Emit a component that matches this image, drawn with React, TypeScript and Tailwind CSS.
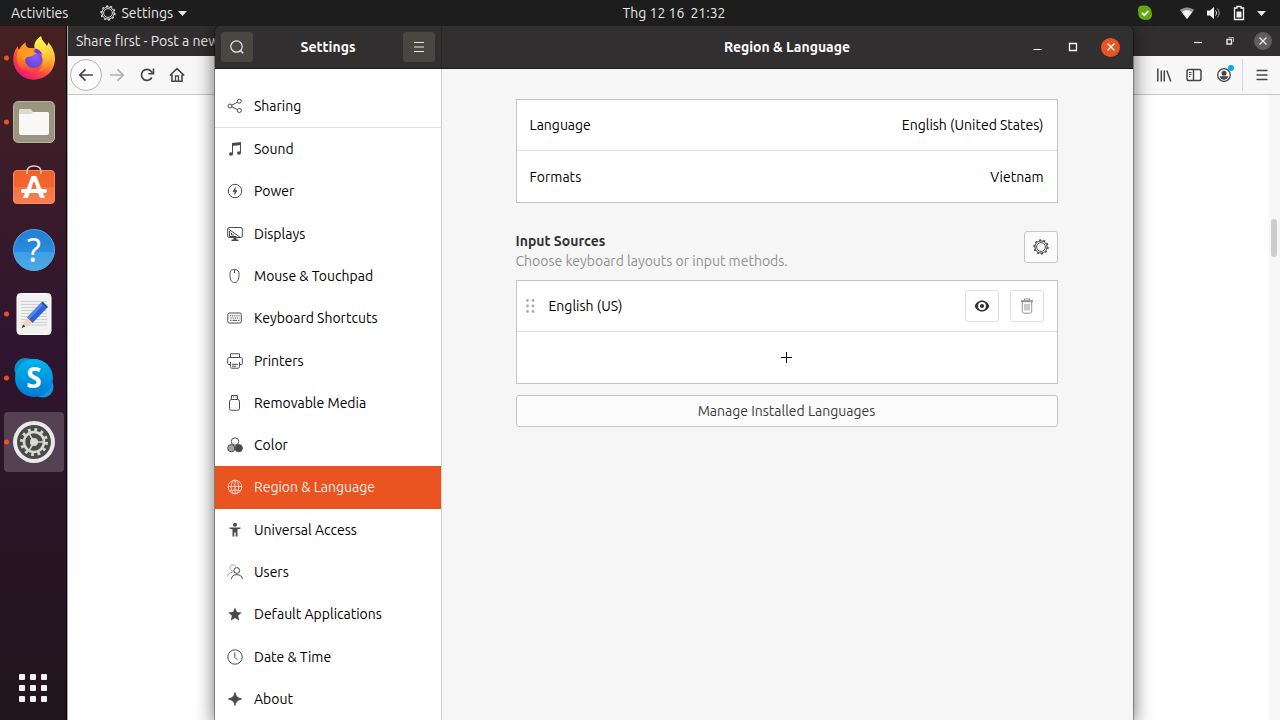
import type { ReactNode } from "react";
import clsx from "clsx";

/* ---------- icons ---------- */

function Svg({ children, size = 16 }: { children: ReactNode; size?: number }) {
  return (
    <svg
      width={size}
      height={size}
      viewBox="0 0 16 16"
      fill="none"
      stroke="currentColor"
      strokeWidth="1"
      aria-hidden="true"
      className="shrink-0"
    >
      {children}
    </svg>
  );
}

const GearIcon = () => (
  <Svg>
    <circle cx="8" cy="8" r="4.4" strokeWidth=".9" />
    <circle cx="8" cy="8" r="6.1" />
    <circle cx="8" cy="8" r="7" strokeWidth="1.3" strokeDasharray="2 2.398" />
  </Svg>
);

const SearchIcon = () => (
  <Svg>
    <circle cx="7.5" cy="7.5" r="5.7" strokeWidth="1.2" />
    <path d="M11.5 11.5 14.200 14.200" strokeWidth="1.6" />
  </Svg>
);

const MenuIcon = () => (
  <Svg>
    <path d="M3 3.5h10M3 8h10M3 12.5h10" strokeWidth="1.2" />
  </Svg>
);

const CloseIcon = () => (
  <Svg>
    <path d="M4.500 4.500l7 7M11.500 4.500l-7 7" strokeWidth="1.400" />
  </Svg>
);

const Caret = () => (
  <svg width="9" height="5" viewBox="0 0 9 5" fill="currentColor" aria-hidden="true">
    <path d="M0 0h9L4.500 5z" />
  </svg>
);

const sharing = (
  <Svg>
    <circle cx="3" cy="8" r="2" />
    <circle cx="12.3" cy="3.2" r="2" />
    <circle cx="12.3" cy="12.5" r="2" />
    <path d="M4.800 7.100l5.700-2.900M4.800 8.900l5.700 2.800" />
  </Svg>
);

const sound = (
  <Svg>
    <path d="M5 2l9-1v3l-9 1z" fill="currentColor" stroke="none" />
    <path d="M5.500 3v10M13.500 2v9.500" />
    <ellipse cx="4" cy="13" rx="2" ry="1.800" fill="currentColor" stroke="none" />
    <ellipse cx="12" cy="12" rx="2" ry="1.800" fill="currentColor" stroke="none" />
  </Svg>
);

const power = (
  <Svg>
    <circle cx="8" cy="8" r="6.700" />
    <path d="M8.700 3.500L5.500 8.800h2L7.300 12.500l3.200-5.300h-2z" fill="currentColor" stroke="none" />
  </Svg>
);

const displays = (
  <Svg>
    <rect x=".7" y="1.500" width="14.600" height="10" rx="1.500" />
    <path d="M1.500 3l12 8.500M2.500 5v5.500h7M4.500 7v2h2.500" />
    <path d="M6.500 12h3v1.500h2V15h-7v-1.500h2z" fill="currentColor" stroke="none" />
  </Svg>
);

const mouse = (
  <Svg>
    <path d="M7.500 1.500C4 1.500 3 3 3 6.500c0 5 1.300 8 4.500 8s4.500-3 4.500-8c0-3.500-1-5-4.500-5z" />
    <path d="M7.500 1.500V5" />
  </Svg>
);

const keyboard = (
  <Svg>
    <rect x=".8" y="3" width="13.500" height="10" rx="1.500" />
    <path d="M3 5.800h9.500M3.500 8h9" strokeDasharray="1.200 .9" />
    <path d="M3 10.300h1.500M5.500 10.300h4.500M11 10.300h1.500" />
  </Svg>
);

const printer = (
  <Svg>
    <path d="M3.500 4.500V.8h9v3.700M3 11.500H1.700C1 11.500.7 11 .7 10.500V6c0-1 .5-1.500 1.500-1.500h11.600c1 0 1.500.5 1.500 1.500v4.500c0 .5-.3 1-1 1H13" />
    <path d="M3.500 9v4.500c0 1.200.5 1.700 1.500 1.700h6c1 0 1.500-.5 1.500-1.700V9M5 11.300h6M5 13.200h4" />
  </Svg>
);

const media = (
  <Svg>
    <path d="M4.500 4.500v-4h6v4" />
    <rect x="2.500" y="4.500" width="10" height="10.800" rx="2" />
    <path d="M6 2h1M8.500 2h1" strokeWidth="1.200" />
  </Svg>
);

const color = (
  <Svg>
    <circle cx="8" cy="4.500" r="3.700" />
    <circle cx="4.300" cy="11.200" r="3.600" fill="#a5a5a5" />
    <circle cx="11.800" cy="11.200" r="3.600" fill="currentColor" />
  </Svg>
);

const globe = (
  <Svg>
    <circle cx="8" cy="8" r="6.800" />
    <ellipse cx="8" cy="8" rx="3.800" ry="6.800" />
    <path d="M8 1.200v13.600M1.200 7.500h13.600M2.500 11.700c3-.7 8-.7 11 0" />
  </Svg>
);

const access = (
  <Svg>
    <g fill="currentColor" stroke="none">
      <circle cx="8" cy="2.800" r="2" />
      <path d="M2.500 5.500h11v1.200l-3 .6v7.200H8.700V10.500H7.300v4H5.500V7.300l-3-.6z" />
    </g>
  </Svg>
);

const users = (
  <Svg>
    <g opacity=".5">
      <path d="M6.500 7.500C4 6.500 3 5 3 3.500 3 1.700 4.200.8 5.800.8c1.500 0 2.500.7 2.800 2" />
      <path d="M.7 12.500C.7 10 2 8.700 5.500 8.300" />
    </g>
    <circle cx="9.800" cy="6.500" r="2.900" />
    <path d="M4.500 15c.3-3 2-4.300 5.200-4.300S15 12 15.400 15" />
  </Svg>
);

const star = (
  <Svg>
    <path
      d="M8 1.500l1.900 4.600 4.900.4-3.700 3.200 1.100 4.800L8 11.900l-4.200 2.600 1.100-4.800L1.200 6.500l4.900-.4z"
      fill="currentColor"
      stroke="none"
    />
  </Svg>
);

const clock = (
  <Svg>
    <circle cx="8" cy="8" r="7.200" />
    <path d="M7.800 3.500v4.800l2.500 2.500" />
  </Svg>
);

const about = (
  <Svg>
    <path
      d="M8 1.500c.8 3.500 1.800 5.200 6.500 6.500C9.800 9.300 8.800 11 8 14.500 7.200 11 6.200 9.300 1.500 8 6.200 6.700 7.200 5 8 1.500z"
      fill="currentColor"
      stroke="currentColor"
    />
  </Svg>
);

/* ---------- dock app icons ---------- */

const FirefoxLogo = () => (
  <svg width="42" height="44" viewBox="0 0 126 130" aria-hidden="true">
    <defs>
      <linearGradient id="ff-body" x1=".85" y1=".1" x2=".25" y2="1">
        <stop offset="0" stopColor="#fff44f" />
        <stop offset=".35" stopColor="#ffa430" />
        <stop offset=".65" stopColor="#ff4b3a" />
        <stop offset="1" stopColor="#e5127e" />
      </linearGradient>
      <linearGradient id="ff-flame" x1=".5" y1="0" x2=".6" y2="1">
        <stop offset="0" stopColor="#fff44f" />
        <stop offset=".5" stopColor="#ffd23c" />
        <stop offset="1" stopColor="#ff7a1c" />
      </linearGradient>
      <linearGradient id="ff-fox" x1=".3" y1="0" x2=".5" y2="1">
        <stop offset="0" stopColor="#ffa41e" />
        <stop offset=".45" stopColor="#ff7a20" />
        <stop offset="1" stopColor="#ff3f4a" />
      </linearGradient>
      <radialGradient id="ff-globe" cx=".6" cy=".35" r=".75">
        <stop offset="0" stopColor="#9059ff" />
        <stop offset="1" stopColor="#5a45c8" />
      </radialGradient>
    </defs>
    <path
      d="M84 0c2 14 12 18 17 29 3-3 4-6 5-11 14 16 21 34 20 54-3 34-28 57-62 58C30 131 2 106 1 72 0 52 8 38 14 30c1 5 2 8 4 11 4-10 12-18 20-23-2 8 2 13 8 16 8 3 16 2 20 0C64 20 74 6 84 0z"
      fill="url(#ff-body)"
    />
    <path
      d="M84 0c2 14 12 18 17 29 8 12 12 24 9 44-5 22-20 32-34 33 14-12 18-30 8-48C76 46 62 42 64 26 66 14 74 6 84 0z"
      fill="url(#ff-flame)"
    />
    <path
      d="M16 42c10-7 20-6 28-3 8-4 20-4 28 2 14 10 20 24 16 38-3 12-9 23-19 26-24 4-48-5-56-25-3-12-2-28 3-38z"
      fill="url(#ff-fox)"
    />
    <circle cx="62" cy="69" r="26" fill="url(#ff-globe)" />
    <path
      d="M16 42c10-7 20-6 28-3 6-3 12-4 17-3-2 4-1 8 2 11 3 2 7 3 10 4-6 2-10 5-15 8-6 3-13 2-18 5-3 2-4 6-4 10C26 66 18 54 16 42z"
      fill="#ff9a22"
    />
    <path d="M64 37c11-1 21 6 25 20-5-5-11-7-17-6-4-3-8-8-8-14z" fill="#7a2fe0" />
  </svg>
);

const FilesLogo = () => (
  <svg width="42" height="42" viewBox="0 0 42 42" aria-hidden="true">
    <rect x=".5" y=".5" width="41" height="41" rx="4.500" fill="#9b9480" stroke="#b8b2a0" />
    <path d="M6 9.500C6 8.500 6.800 8 7.500 8H18l2 3v5H6z" fill="#dfdacb" />
    <path d="M6 13h12l2-2h14.500c1 0 1.500.6 1.500 1.500V32c0 1.200-.8 2-2 2H8c-1.200 0-2-.8-2-2z" fill="#f9f8f6" />
  </svg>
);

const SoftwareLogo = () => (
  <svg width="42" height="42" viewBox="0 2 42 42" aria-hidden="true">
    <defs>
      <linearGradient id="bag" x1="0" y1="0" x2="0" y2="1">
        <stop offset="0" stopColor="#f1602a" />
        <stop offset=".5" stopColor="#f2652f" />
        <stop offset=".5" stopColor="#f4743f" />
        <stop offset="1" stopColor="#f4804d" />
      </linearGradient>
    </defs>
    <rect x=".5" y="7.500" width="41" height="33" rx="3.500" fill="url(#bag)" stroke="#f58a60" />
    <path d="M14 11V9c0-4 3-6 7-6s7 2 7 6v2" fill="none" stroke="#f3cfa2" strokeWidth="1.500" />
    <text
      x="21"
      y="35"
      textAnchor="middle"
      fontFamily="Lato, sans-serif"
      fontWeight="900"
      fontSize="30"
      fill="#fff"
    >
      A
    </text>
    <rect x="8" y="26" width="26" height="4" rx="2" fill="#fff" />
  </svg>
);

const HelpLogo = () => (
  <svg width="42" height="42" viewBox="0 0 42 42" aria-hidden="true">
    <defs>
      <linearGradient id="help" x1="0" y1="0" x2="0" y2="1">
        <stop offset="0" stopColor="#1f80d6" />
        <stop offset=".54" stopColor="#2b8bdc" />
        <stop offset=".54" stopColor="#3f9de2" />
        <stop offset="1" stopColor="#4caae8" />
      </linearGradient>
    </defs>
    <circle cx="21" cy="21" r="20.500" fill="url(#help)" stroke="#56a9e6" />
    <text
      x="21"
      y="33"
      textAnchor="middle"
      fontFamily="'Noto Sans', sans-serif"
      fontSize="32"
      fill="#fff"
    >
      ?
    </text>
  </svg>
);

const EditorLogo = () => (
  <svg width="42" height="42" viewBox="0 0 42 42" aria-hidden="true">
    <rect x="4" y=".5" width="34" height="41" rx="3.500" fill="#f1f1f1" stroke="#fff" />
    <path
      d="M8 8.500h26M8 11.500h26M8 14.500h26M8 17.500h26M8 20.500h26M8 23.500h26M8 26.500h26M8 29.500h26M8 32h26"
      stroke="#c9c9c9"
      strokeWidth=".8"
    />
    <path d="M14 24.500L28 10l5.500 5.500L19.500 30z" fill="#2f62d9" />
    <path d="M14 24.500L28 10l2 2-14 14.500z" fill="#5484ee" />
    <path d="M28 10l1.500-1.500 5.500 5.500-1.500 1.500z" fill="#1d45ae" />
    <path d="M14 24.500l5.500 5.500L9 34.500z" fill="#f5d3ac" />
    <path d="M10.300 31.500l2 2L8.500 35z" fill="#333" />
  </svg>
);

const SkypeLogo = () => (
  <svg width="42" height="42" viewBox="0 0 42 42" aria-hidden="true">
    <defs>
      <linearGradient id="skype" x1="0" y1="0" x2="0" y2="1">
        <stop offset="0" stopColor="#00b7f0" />
        <stop offset="1" stopColor="#0078d4" />
      </linearGradient>
    </defs>
    <circle cx="12.500" cy="12" r="11" fill="#0a8fc9" />
    <circle cx="30" cy="30" r="10.500" fill="#1494dc" />
    <circle cx="21" cy="21" r="19" fill="url(#skype)" />
    <text
      x="21"
      y="31"
      textAnchor="middle"
      fontFamily="'Open Sans', sans-serif"
      fontWeight="700"
      fontSize="28"
      fill="#fff"
    >
      S
    </text>
  </svg>
);

const SettingsLogo = () => (
  <svg width="42" height="42" viewBox="0 0 42 42" fill="none" aria-hidden="true">
    <circle cx="21" cy="21" r="21" fill="#e9e9e9" />
    <circle cx="21" cy="21" r="17" fill="#4a4a48" />
    <circle cx="21" cy="21" r="12.500" stroke="#d8d8d8" strokeWidth="3" strokeDasharray="2.800 3.745" />
    <circle cx="21" cy="21" r="10" stroke="#d8d8d8" strokeWidth="2.600" />
    <circle cx="21" cy="21" r="4" fill="#d8d8d8" />
    <path d="M21 21h10M21 21l-5-8.700M21 21l-5 8.700" stroke="#d8d8d8" strokeWidth="1.600" />
  </svg>
);

/* ---------- data ---------- */

type DockApp = { name: string; icon: ReactNode; running?: boolean; active?: boolean };

const DOCK: DockApp[] = [
  { name: "Firefox", icon: <FirefoxLogo />, running: true },
  { name: "Files", icon: <FilesLogo />, running: true },
  { name: "Ubuntu Software", icon: <SoftwareLogo /> },
  { name: "Help", icon: <HelpLogo /> },
  { name: "Text Editor", icon: <EditorLogo />, running: true },
  { name: "Skype", icon: <SkypeLogo />, running: true },
  { name: "Settings", icon: <SettingsLogo />, running: true, active: true },
];

const PANELS: { label: string; icon: ReactNode }[] = [
  { label: "Sound", icon: sound },
  { label: "Power", icon: power },
  { label: "Displays", icon: displays },
  { label: "Mouse & Touchpad", icon: mouse },
  { label: "Keyboard Shortcuts", icon: keyboard },
  { label: "Printers", icon: printer },
  { label: "Removable Media", icon: media },
  { label: "Color", icon: color },
  { label: "Region & Language", icon: globe },
  { label: "Universal Access", icon: access },
  { label: "Users", icon: users },
  { label: "Default Applications", icon: star },
  { label: "Date & Time", icon: clock },
  { label: "About", icon: about },
];

/* ---------- desktop shell ---------- */

function TopBar() {
  return (
    <header className="flex h-[26px] shrink-0 items-center bg-[#1d1d1d] text-[#e6e6e6]">
      <div className="flex w-[212px] items-center gap-8 pl-[11px]">
        <button>Activities</button>
        <button className="flex items-center gap-[5px]">
          <GearIcon />
          Settings
          <Caret />
        </button>
      </div>
      <div className="flex-1 text-center">
        <button className="inline-flex gap-1.5">
          <span>Thg 12 16</span>
          <span>21:32</span>
        </button>
      </div>
      <div className="flex w-36 items-center justify-end gap-2.5 pr-3.5">
        <svg width="16" height="16" viewBox="0 0 16 16" className="mr-4" aria-label="Skype">
          <path
            d="M1 4.500C1 2 2.500.5 5 .8c5-1 9.500 1 9.700 7 1.300 4-1.500 7.700-5.200 7C4 15.500.7 12 1.300 7.500 1 6.500 1 5.500 1 4.500z"
            fill="#62a813"
          />
          <path d="M5 8l2.300 2.200L11.300 6" fill="none" stroke="#fff" strokeWidth="1.800" />
        </svg>
        <svg width="16" height="16" viewBox="0 0 16 16" fill="#f2f2f2" aria-label="Wi-Fi">
          <path d="M.8 5C5 1.500 11 1.500 15.200 5L8 14z" opacity=".55" />
          <path d="M2.800 7C6 4.800 10 4.800 13.200 7L8 14z" />
        </svg>
        <svg width="16" height="16" viewBox="0 0 16 16" fill="#f2f2f2" aria-label="Volume">
          <path d="M2 5.500h3L9 2v12L5 10.500H2z" />
          <path d="M10.500 5.500c1.300 1.500 1.300 3.500 0 5" fill="none" stroke="#f2f2f2" />
          <path d="M12.300 3.500c2.500 2.800 2.500 6.200 0 9" fill="none" stroke="#aaa" />
        </svg>
        <svg width="16" height="16" viewBox="0 0 16 16" fill="none" stroke="#f2f2f2" aria-label="Battery">
          <path d="M3.500 3H6V1.500h4V3h2.500v11.500h-9z" strokeWidth="1.300" />
          <path d="M5.500 6.500h5v6h-5z" fill="#f2f2f2" stroke="none" />
        </svg>
        <Caret />
      </div>
    </header>
  );
}

function Dock() {
  return (
    <nav
      aria-label="Dock"
      className="flex w-[67px] shrink-0 flex-col gap-1 border-r border-black bg-linear-to-b from-[#46201f] via-[#301530] via-45% to-[#22151c] pt-[2px]"
    >
      {DOCK.map((app) => (
        <button
          key={app.name}
          aria-label={app.name}
          className={clsx(
            "relative mx-1 flex h-[60px] w-[60px] shrink-0 items-center justify-center rounded",
            app.active && "bg-[#544254]"
          )}
        >
          {app.running && (
            <span className="absolute left-0 top-1/2 h-[5px] w-[5px] -translate-y-1/2 rounded-full bg-[#e95420]" />
          )}
          {app.icon}
        </button>
      ))}
      <button aria-label="Show Applications" className="mx-auto mb-[18px] mt-auto grid grid-cols-3 gap-[5px]">
        {Array.from({ length: 9 }, (_, i) => (
          <span key={i} className="h-1.5 w-1.5 rounded-[1px] bg-[#f2f2f2]" />
        ))}
      </button>
    </nav>
  );
}

function BrowserWindow() {
  return (
    <section className="flex min-w-0 flex-1 flex-col border-l border-[#a9a9a9] bg-white">
      <div className="flex h-[30px] shrink-0 items-center justify-between bg-[#312e2f] px-2 text-[#e8e8e8]">
        <span className="whitespace-nowrap">Share first - Post a new</span>
        <div className="flex items-center gap-4">
          <button aria-label="Minimize">
            <Svg>
              <path d="M4 9.500h8" strokeWidth="1.200" />
            </Svg>
          </button>
          <button aria-label="Restore">
            <Svg>
              <path d="M5 6.500h4.500V11H5z" strokeWidth="1.400" />
              <path d="M6.500 4.500h5V9" opacity=".7" />
            </Svg>
          </button>
          <button aria-label="Close" className="flex h-[18px] w-[18px] items-center justify-center rounded-full bg-[#5f5e5e]">
            <CloseIcon />
          </button>
        </div>
      </div>
      <div className="flex h-[39px] shrink-0 items-center justify-between border-b border-[#c6c6c6] bg-[#f7f7f7] px-[2px] text-[#454545]">
        <div className="flex items-center gap-3.5">
          <button aria-label="Back" className="flex h-8 w-8 items-center justify-center rounded-full border border-[#b3b3b3] bg-[#fcfcfc]">
            <Svg>
              <path d="M15 8H2M7.500 2.300L1.800 8l5.700 5.700" strokeWidth="1.700" />
            </Svg>
          </button>
          <button aria-label="Forward" disabled className="-ml-[7px] text-[#b0b0b0]">
            <Svg>
              <path d="M1 8h13M8.500 2.300L14.200 8l-5.700 5.700" strokeWidth="1.700" />
            </Svg>
          </button>
          <button aria-label="Reload">
            <Svg>
              <path d="M12.800 10.500A5.500 5.500 0 1 1 12 4.200l1.500 1.600" strokeWidth="1.700" />
              <path d="M14.500 1.500v5.300H9.300" strokeWidth="1.600" />
            </Svg>
          </button>
          <button aria-label="Home">
            <Svg>
              <path d="M.8 8.500L8 1.700l7.200 6.800M3 7.500v6.800h10V7.500" strokeWidth="1.600" />
              <path d="M6.500 14V9h3v5" strokeWidth="1.300" />
            </Svg>
          </button>
        </div>
        <div className="flex items-center gap-3.5 pr-2">
          <button aria-label="Library">
            <Svg>
              <path d="M1.800 1.500v13M5.300 3.500v11M8.300 3.500v11M10.800 3.500l4 11" strokeWidth="1.500" />
            </Svg>
          </button>
          <button aria-label="Sidebars">
            <Svg>
              <rect x="1" y="2.500" width="14" height="11" rx="1.800" strokeWidth="1.500" />
              <path d="M7.500 2.500v11" strokeWidth="1.400" />
              <path d="M3 5.500h2.500M3 7.500h2.500M3 9.500h1.500" />
            </Svg>
          </button>
          <button aria-label="Account" className="relative">
            <Svg>
              <circle cx="8" cy="8" r="6.300" strokeWidth="1.300" />
              <circle cx="8" cy="6.300" r="2.500" fill="currentColor" stroke="none" />
              <path d="M3.800 9.300h8.400c-.5 2.300-2.200 3.400-4.200 3.400s-3.700-1.100-4.200-3.400z" fill="currentColor" stroke="none" />
            </Svg>
            <span className="absolute -right-0.5 -top-0.5 h-1.5 w-1.5 rounded-full bg-[#00a8f5]" />
          </button>
          <span className="-ml-1 -mr-[3px] h-8 w-px bg-[#d9d9d9]" />
          <button aria-label="Open menu">
            <Svg>
              <path d="M2.500 3.500h11M2.500 8h11M2.500 12.500h11" strokeWidth="1.500" />
            </Svg>
          </button>
        </div>
      </div>
      <div className="flex flex-1 justify-end">
        <div className="w-[11px] bg-[#f6f6f6] px-[2px] pt-[124px]">
          <div className="h-[38px] w-1.5 rounded-full bg-[#cdcdcd]" />
        </div>
      </div>
    </section>
  );
}

/* ---------- settings window ---------- */

function SidebarRow({ label, icon, selected }: { label: string; icon: ReactNode; selected?: boolean }) {
  return (
    <a
      href="#"
      aria-current={selected ? "page" : undefined}
      className={clsx(
        "flex min-h-[42px] flex-1 items-center gap-[11px] pl-3",
        selected ? "bg-[#e95420] text-[#fdeee8]" : "text-black"
      )}
    >
      <span className={selected ? "text-[#fbd3c4]" : "text-[#4a4a4a]"}>{icon}</span>
      {label}
    </a>
  );
}

function Sidebar() {
  return (
    <aside className="flex w-[227px] shrink-0 flex-col border-r border-[#cfcfcf] bg-white">
      <div className="flex h-[59px] shrink-0 items-end border-b border-[#e2e2e2]">
        <SidebarRow label="Sharing" icon={sharing} />
      </div>
      <nav aria-label="Settings panels" className="flex flex-1 flex-col">
        {PANELS.map((p) => (
          <SidebarRow key={p.label} label={p.label} icon={p.icon} selected={p.label === "Region & Language"} />
        ))}
      </nav>
    </aside>
  );
}

function ListBox({ children }: { children: ReactNode }) {
  return <div className="divide-y divide-[#e1e1e1] border border-[#c4c4c4] bg-white">{children}</div>;
}

function ValueRow({ label, value }: { label: string; value: string }) {
  return (
    <button className="flex h-[51px] w-full items-center justify-between px-[13px]">
      <span>{label}</span>
      <span>{value}</span>
    </button>
  );
}

function RegionPanel() {
  return (
    <main className="flex-1 bg-[#f6f6f6] pl-6 pr-[26px] pt-[30px]">
      <div className="mx-auto max-w-[542px]">
        <ListBox>
          <ValueRow label="Language" value="English (United States)" />
          <ValueRow label="Formats" value="Vietnam" />
        </ListBox>

        <div className="mt-7 flex items-start justify-between">
          <div>
            <h2 className="font-bold text-[#333]">Input Sources</h2>
            <p className="text-[#929292]">Choose keyboard layouts or input methods.</p>
          </div>
          <button
            aria-label="Input source options"
            className="flex h-8 w-[34px] items-center justify-center rounded-[3px] border border-[#c6c6c6] bg-[#fbfbfb] text-[#3b3b3b]"
          >
            <GearIcon />
          </button>
        </div>

        <div className="mt-[9px]">
          <ListBox>
            <div className="flex h-[51px] items-center px-[13px]">
              <svg width="10" height="16" viewBox="0 0 10 16" fill="#ababab" className="-ml-1 mr-[13px]" aria-hidden="true">
                <circle cx="1.500" cy="2.500" r="1.400" />
                <circle cx="7" cy="2.500" r="1.400" />
                <circle cx="1.500" cy="8" r="1.400" />
                <circle cx="7" cy="8" r="1.400" />
                <circle cx="1.500" cy="13.500" r="1.400" />
                <circle cx="7" cy="13.500" r="1.400" />
              </svg>
              <span className="flex-1">English (US)</span>
              <div className="flex gap-[11px]">
                <button
                  aria-label="View layout"
                  className="flex h-8 w-[34px] items-center justify-center rounded-[3px] border border-[#e0e0e0] text-[#333]"
                >
                  <Svg>
                    <path
                      d="M8 2.500C4.500 2.500 1.500 5 .7 8c.8 3 3.800 5.500 7.300 5.500s6.500-2.500 7.300-5.500C14.500 5 11.500 2.500 8 2.500z"
                      fill="currentColor"
                      stroke="none"
                    />
                    <circle cx="8" cy="8" r="3" fill="#333" stroke="#fff" strokeWidth="1.800" />
                  </Svg>
                </button>
                <button
                  aria-label="Remove"
                  disabled
                  className="flex h-8 w-[34px] items-center justify-center rounded-[3px] border border-[#e0e0e0] text-[#929292]"
                >
                  <Svg>
                    <path d="M5.500 3V1h5v2" strokeWidth="1.200" />
                    <path d="M2 3.200h12" strokeWidth="2" />
                    <path d="M3.300 4v9.500c0 1 .5 1.700 1.500 1.700h6.400c1 0 1.500-.7 1.500-1.700V4M6 6v6.500M8 6v6.500M10 6v6.500" />
                  </Svg>
                </button>
              </div>
            </div>
            <button aria-label="Add input source" className="flex h-[51px] w-full items-center justify-center text-black">
              <svg width="11" height="11" viewBox="0 0 11 11" stroke="currentColor" aria-hidden="true">
                <path d="M5.500 0v11M0 5.500h11" />
              </svg>
            </button>
          </ListBox>
        </div>

        <button className="mt-[11px] h-8 w-full rounded-[3px] border border-[#c4c4c4] bg-[#fbfbfb] text-[#3b3b3b]">
          Manage Installed Languages
        </button>
      </div>
    </main>
  );
}

function SettingsWindow() {
  return (
    <section className="absolute bottom-0 left-[148px] right-[147px] top-0 flex flex-col overflow-hidden rounded-t-md shadow-[0_0_0_1px_rgba(0,0,0,0.3),0_3px_18px_2px_rgba(0,0,0,0.5)]">
      <div className="flex h-[43px] shrink-0 border-b border-[#1a1a1a] bg-[#322f30] font-bold text-white">
        <div className="flex w-[227px] shrink-0 items-center justify-between border-r border-[#272525] px-1.5">
          <button aria-label="Search" className="flex h-[30px] w-8 items-center justify-center rounded-[3px] bg-[#4a4743] text-[#e6e6e6]">
            <SearchIcon />
          </button>
          <h1>Settings</h1>
          <button aria-label="Menu" className="flex h-[30px] w-8 items-center justify-center rounded-[3px] bg-[#4a4743] text-[#e6e6e6]">
            <MenuIcon />
          </button>
        </div>
        <div className="grid flex-1 grid-cols-[1fr_auto_1fr] items-center pr-[13px]">
          <span />
          <h1 className="pl-3">Region &amp; Language</h1>
          <div className="flex items-center justify-end gap-5">
            <button aria-label="Minimize">
              <Svg>
                <path d="M4.500 10.500h8" strokeWidth="1.200" />
              </Svg>
            </button>
            <button aria-label="Maximize">
              <Svg>
                <path d="M4.500 4.500h7v7h-7z" strokeWidth="1.300" />
              </Svg>
            </button>
            <button aria-label="Close" className="flex h-[19px] w-[19px] items-center justify-center rounded-full bg-[#e95420]">
              <CloseIcon />
            </button>
          </div>
        </div>
      </div>
      <div className="flex min-h-0 flex-1">
        <Sidebar />
        <RegionPanel />
      </div>
    </section>
  );
}

export default function App() {
  return (
    <div className="flex h-screen flex-col overflow-hidden font-['Ubuntu','Noto_Sans','Liberation_Sans',sans-serif] text-[14px] leading-5">
      <TopBar />
      <div className="flex min-h-0 flex-1">
        <Dock />
        <div className="relative flex min-w-0 flex-1 overflow-hidden">
          <BrowserWindow />
          <SettingsWindow />
        </div>
      </div>
    </div>
  );
}
